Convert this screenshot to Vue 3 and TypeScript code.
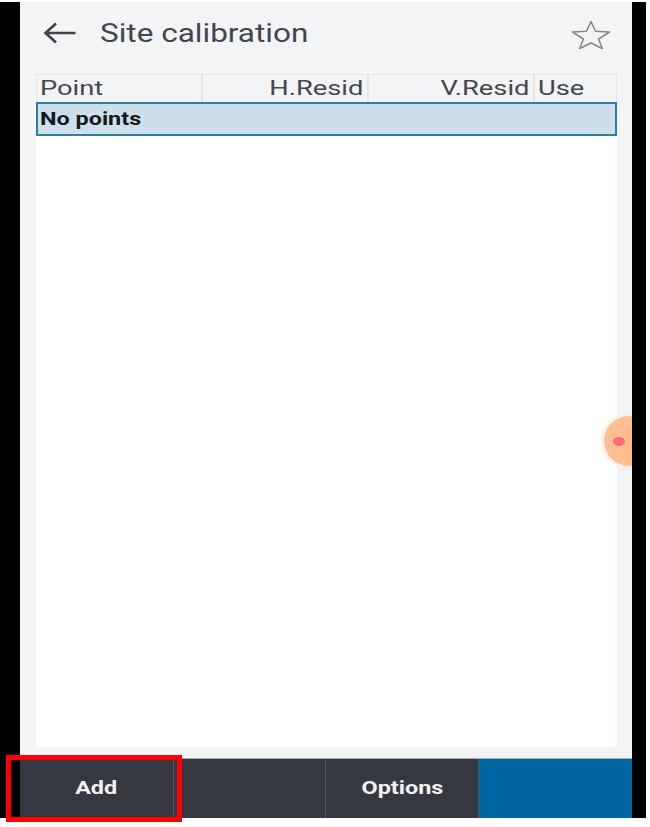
<script setup lang="ts">
interface Column { label: string; cls: string }
const columns: Column[] = [
  { label: 'Point', cls: 'c-point' },
  { label: 'H.Resid', cls: 'c-h' },
  { label: 'V.Resid', cls: 'c-v' },
  { label: 'Use', cls: 'c-use' },
]
const actions = [
  { label: 'Add', cls: 'dark' },
  { label: '', cls: 'dark' },
  { label: 'Options', cls: 'dark' },
  { label: '', cls: 'blue' },
]
</script>

<template>
  <div class="page">
    <div class="frame">
      <div class="screen">
        <header class="bar">
          <svg class="back" viewBox="0 0 34 24" width="34" height="24" aria-hidden="true">
            <path d="M32.5 12H3M13 2.5 2.5 12 13 21.5" fill="none" stroke="#3f4249" stroke-width="2.6" />
          </svg>
          <h1 class="title"><span class="wide">Site calibration</span></h1>
          <svg class="star" viewBox="0 0 40 30" width="40" height="30" aria-hidden="true">
            <path d="M20 1.5 24.6 11.2 38.5 12 27.6 19 31.3 28.5 20 23 8.7 28.5 12.4 19 1.5 12 15.4 11.2Z" fill="none" stroke="#85878a" stroke-width="1.5" stroke-linejoin="round" />
          </svg>
        </header>
        <main class="content">
          <div class="table">
            <div class="head">
              <div v-for="c in columns" :key="c.label" class="cell" :class="c.cls"><span class="wide">{{ c.label }}</span></div>
            </div>
            <div class="row"><span class="wide">No points</span></div>
          </div>
        </main>
        <footer class="actions">
          <div v-for="(a, i) in actions" :key="i" class="action" :class="a.cls"><span class="wide">{{ a.label }}</span></div>
        </footer>
        <div class="bubble"><span class="dot"></span></div>
      </div>
    </div>
    <div class="highlight"></div>
  </div>
</template>

<style>
html, body { margin: 0; background: #fff; }
</style>

<style scoped>
.page {
  position: relative;
  width: 650px;
  height: 827px;
  padding: 2px 4px 9px 0;
  box-sizing: border-box;
  background: #fff;
  overflow: hidden;
  font-family: "Roboto", "Liberation Sans", sans-serif;
}
.frame {
  height: 100%;
  padding: 0 14px 0 20px;
  box-sizing: border-box;
  background: #000;
}
.screen {
  position: relative;
  height: 100%;
  display: flex;
  flex-direction: column;
  background: #f3f4f6;
  overflow: hidden;
}
.wide {
  display: inline-block;
  transform: scaleX(1.3);
  transform-origin: left center;
}
.bar {
  height: 72px;
  flex: none;
  display: flex;
  align-items: center;
  padding: 0 21px 10px 23px;
  box-sizing: border-box;
}
.back { flex: none; }
.title {
  margin: 0 0 0 23px;
  flex: 1;
  font-size: 25px;
  font-weight: 400;
  color: #43464d;
}
.title .wide { transform: scaleX(1.26); }
.star { flex: none; margin-bottom: -3px; }
.content {
  flex: 1;
  min-height: 0;
  margin: 0 15px 11px 16px;
  background: #fffffd;
}
.head {
  display: grid;
  grid-template-columns: 166px 166px 166px 1fr;
  height: 28px;
  background: #f3f4f6;
  border: 1px solid #e3e4e6;
  border-bottom: 0;
  box-sizing: border-box;
}
.cell {
  font-size: 21px;
  line-height: 27px;
  color: #44474d;
  padding: 0 4px;
  border-right: 2px solid #e3e4e6;
  box-sizing: border-box;
  white-space: nowrap;
}
.c-point { padding-left: 3px; }
.c-h, .c-v { text-align: right; }
.c-h .wide, .c-v .wide { transform-origin: right center; }
.c-use { border-right: 0; padding-left: 3px; }
.row {
  height: 34px;
  box-sizing: border-box;
  border: 2px solid #2a7fa8;
  background: #cde0ea;
  padding-left: 2px;
  font-size: 18px;
  line-height: 29px;
  font-weight: 700;
  color: #14181c;
}
.actions {
  flex: none;
  height: 60px;
  display: grid;
  grid-template-columns: 154px 152px 153px 1fr;
  border-top: 1px solid #a9abb0;
  box-sizing: border-box;
}
.action {
  display: flex;
  align-items: center;
  justify-content: center;
  color: #f2f2f3;
  font-size: 18px;
  font-weight: 700;
  padding-bottom: 2px;
  box-sizing: border-box;
}
.action .wide { transform-origin: center; }
.dark { background: #363841; border-right: 1px solid #55575e; }
.blue { background: #0067a3; }
.bubble {
  position: absolute;
  left: 584px;
  top: 414px;
  width: 50px;
  height: 50px;
  border-radius: 50%;
  background: radial-gradient(circle at 45% 50%, #fdb98a 0%, #fdc598 100%);
  box-shadow: 0 0 3px 3px #fdeee3;
  display: flex;
  align-items: center;
  justify-content: center;
}
.dot {
  width: 12px;
  height: 9px;
  border-radius: 50%;
  background: #fb6c74;
  margin-right: 20px;
}
.highlight {
  position: absolute;
  left: 6px;
  top: 755px;
  width: 176px;
  height: 67px;
  box-sizing: border-box;
  border: 5px solid #f00;
}
</style>
